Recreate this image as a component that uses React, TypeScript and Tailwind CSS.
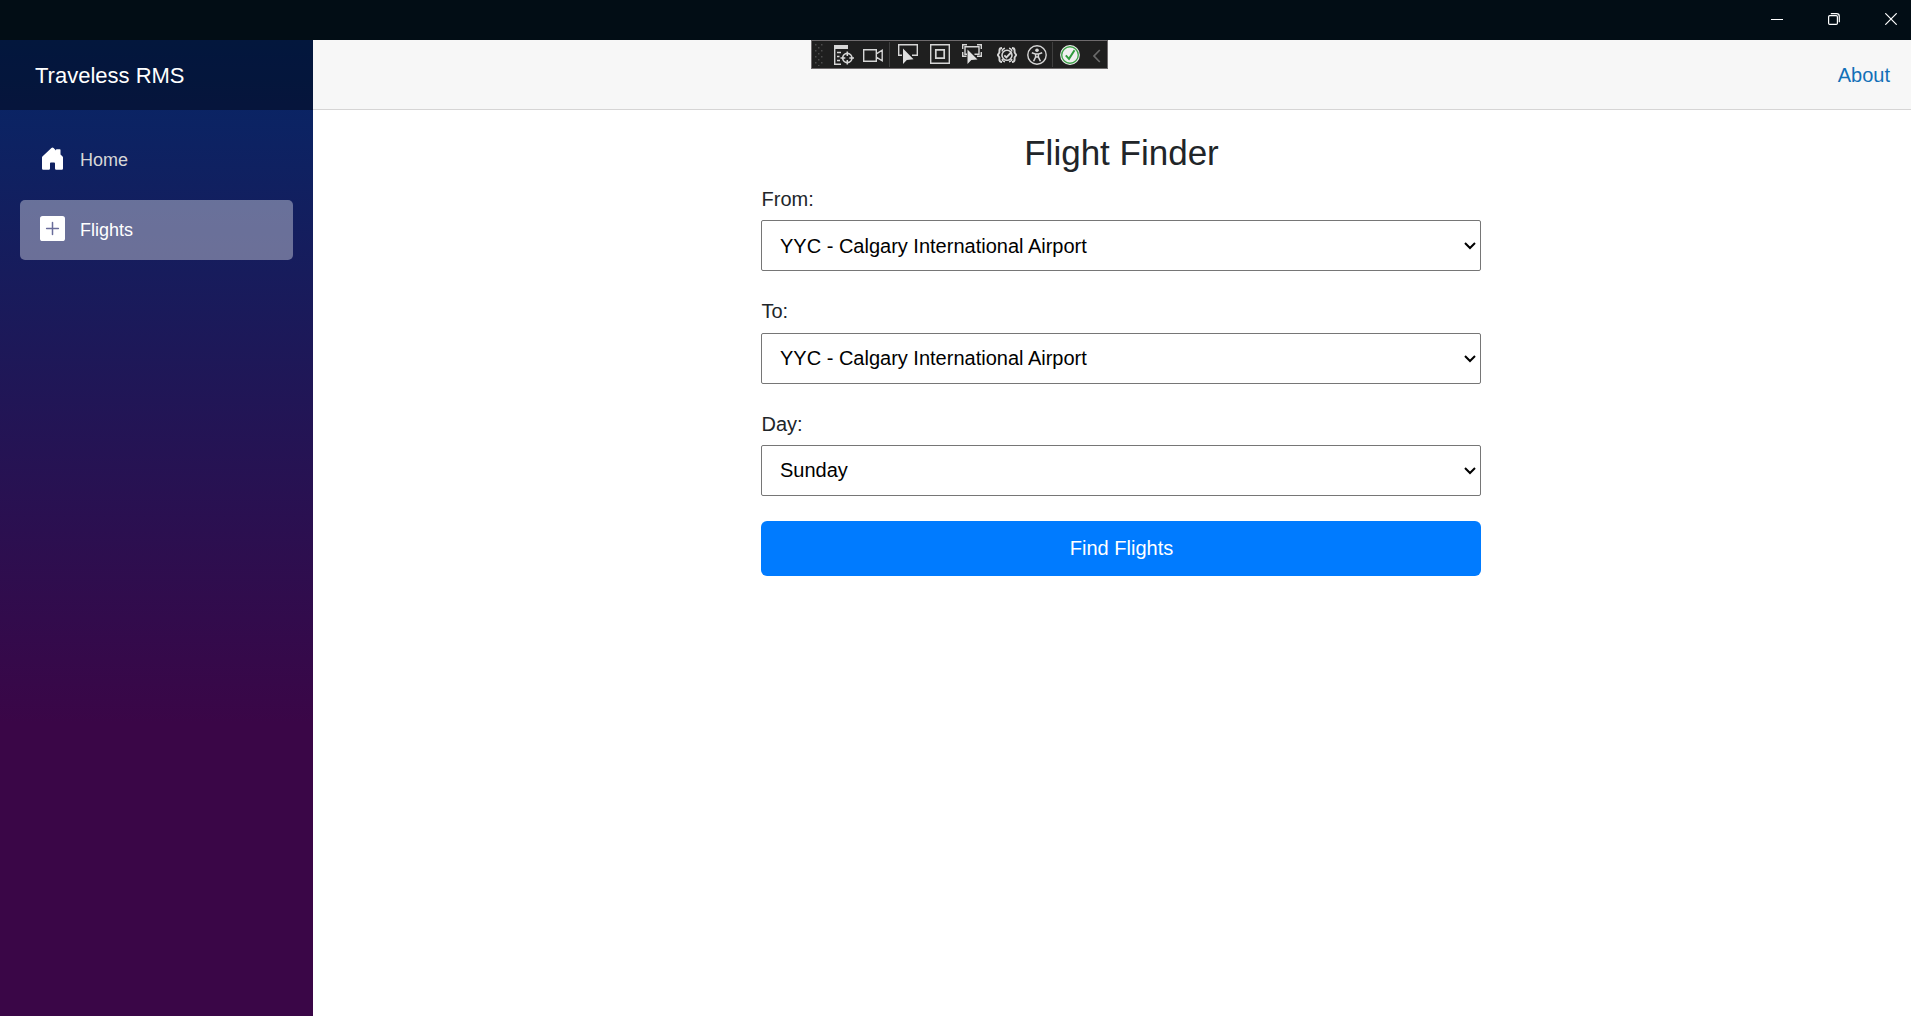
import type { ReactNode } from "react";

const sans = "font-['Liberation_Sans',Arial,sans-serif]";

function Icon({ className, children, w = 20, h = 20 }: { className?: string; children: ReactNode; w?: number; h?: number }) {
  return (
    <svg className={`shrink-0 ${className ?? ""}`} width={w} height={h} viewBox={`0 0 ${w} ${h}`} fill="none" stroke="#d6d6d6" strokeWidth="1.4">
      {children}
    </svg>
  );
}

function WindowControls() {
  return (
    <div className="flex h-10 shrink-0 items-center justify-end gap-[45px] bg-[#020d15] pr-[14px] pb-0.5">
      <Icon w={12} h={12}>
        <path d="M0 6.5H12" stroke="#fff" strokeWidth="1" />
      </Icon>
      <Icon w={12} h={12}>
        <rect x="0.6" y="2.6" width="8.8" height="8.8" rx="1.2" stroke="#fff" strokeWidth="1.2" />
        <path d="M2.8 0.7H8.6Q11.3 0.7 11.3 3.4V9.2" stroke="#fff" strokeWidth="1.2" />
      </Icon>
      <Icon w={12} h={12}>
        <path d="M0.3 0.3L11.7 11.7M11.7 0.3L0.3 11.7" stroke="#fff" strokeWidth="1.2" />
      </Icon>
    </div>
  );
}

const gripRows = [0, 1, 2, 3, 4, 5, 6, 7];

function DebugToolbar() {
  return (
    <div className="absolute top-10 left-[811px] flex h-[29px] w-[297px] items-center border border-[#6e6a6c] bg-[#1f1f1f]">
      <Icon w={8} h={22} className="ml-[3px]">
        {gripRows.map((r) => (
          <g key={r} fill="#4b4b4b" stroke="none">
            {r % 2 === 0 ? (
              <>
                <rect x="0" y={r * 3} width="1.5" height="1.5" />
                <rect x="6" y={r * 3} width="1.5" height="1.5" />
              </>
            ) : (
              <rect x="3" y={r * 3} width="1.5" height="1.5" />
            )}
          </g>
        ))}
      </Icon>
      <Icon className="ml-[11px]">
        <path d="M0 0H14V4H0Z" fill="#d6d6d6" stroke="none" />
        <path d="M0.7 3V19.3H7M3 7.5H7M3 11.5H5.5M3 15.5H6" />
        <circle cx="13.3" cy="13" r="4.6" strokeWidth="1.7" />
        <path d="M13.3 6.5V11M13.3 15V19.5M6.5 13H11.3M15.3 13H20" strokeWidth="1.5" />
      </Icon>
      <Icon className="ml-[9px]">
        <path d="M0.7 4.7H13.3V16.3H0.7ZM13.3 8.8L19.2 5.2V15.8L13.3 12.2" />
      </Icon>
      <div className="ml-[6px] h-[25px] w-px bg-[#3f3f3f]" />
      <Icon className="ml-[8px] -mt-px">
        <path d="M4 11.3H0.7V0.7H19.3V11.3H14" />
        <path d="M5 4.5V20L8.8 16L15.5 15.3Z" fill="#e0e0e0" stroke="none" />
      </Icon>
      <Icon className="ml-[12px] -mt-px">
        <path d="M0.7 0.7H19.3V19.3H0.7Z" />
        <path d="M5.8 5.8H14.2V14.2H5.8Z" strokeWidth="1.7" />
      </Icon>
      <Icon className="ml-[12px] -mt-px">
        <path d="M0.7 5V0.7H5M15 0.7H19.3V5M0.7 8V12.3H4.5M19.3 8V12.3H15M5 10.3H3V2.7H17V10.3H12.5" />
        <path d="M5.5 5.5V20L9.3 16L15.5 15.5Z" fill="#e0e0e0" stroke="none" />
      </Icon>
      <Icon className="ml-[15px]">
        <path d="M5 3Q2.4 3 2.4 5.5V7.5L0.8 10L2.4 12.5V14.5Q2.4 17 5 17M15 3Q17.6 3 17.6 5.5V7.5L19.2 10L17.6 12.5V14.5Q17.6 17 15 17" strokeWidth="1.9" />
        <path d="M8 3.3Q5.2 3.6 5.2 6.5M12 3.3Q14.8 3.6 14.8 6.5M5.2 14Q5.2 16.4 8 16.7M14.8 14Q14.8 16.4 12 16.7" />
        <circle cx="10" cy="10.3" r="5" strokeWidth="1.6" />
        <path d="M7.3 10.3L9.4 12.4L14.5 7" strokeWidth="1.9" />
      </Icon>
      <Icon className="ml-[10px]">
        <circle cx="10" cy="10" r="9.2" />
        <circle cx="10" cy="5.3" r="1.8" fill="#d6d6d6" stroke="none" />
        <path d="M4.8 7.8L8.3 8.9H11.7L15.2 7.8M8.6 9V12L6.6 16.3M11.4 9V12L13.4 16.3M8.6 12H11.4" strokeWidth="1.5" />
      </Icon>
      <div className="ml-[5px] h-[25px] w-px bg-[#3f3f3f]" />
      <Icon className="ml-[7px]">
        <circle cx="10" cy="10" r="9.9" fill="#f0f0f0" stroke="none" />
        <circle cx="10" cy="10" r="8.3" stroke="#3fa24a" strokeWidth="1.4" />
        <path d="M5.8 10.3L9 13.8L14.5 5.2" stroke="#2f9a3c" strokeWidth="2" />
      </Icon>
      <Icon w={8} h={14} className="ml-[13px] mt-0.5">
        <path d="M6.8 1L1 7L6.8 13" stroke="#6a6a6a" strokeWidth="1.7" />
      </Icon>
    </div>
  );
}

function Sidebar() {
  return (
    <aside className="flex w-[313px] shrink-0 flex-col bg-[linear-gradient(180deg,rgb(5,39,103)_0%,#3a0647_70%)]">
      <div className="flex h-[70px] items-center bg-black/40 pl-[35px] text-[22px] text-white">Traveless RMS</div>
      <nav className="flex flex-col gap-2.5 px-5 pt-5 text-[18px]">
        <a className="flex h-[60px] items-center pl-5 text-[#d7d7d7]">
          <svg className="mr-[15px] -mt-1 shrink-0" width="25" height="25" viewBox="0 0 25 25" fill="#fff">
            <path d="M11.4 2Q12.5 1 13.6 2L16 4.4V3.8Q16 3.2 16.7 3.2H19.8Q20.5 3.2 20.5 3.8V8.4L22.6 10.6Q23 11 23 11.6V22.5Q23 23.7 21.8 23.7H16.2Q15 23.7 15 22.5V17.5Q15 16.6 14.1 16.6H10.9Q10 16.6 10 17.5V22.5Q10 23.7 8.8 23.7H3.2Q2 23.7 2 22.5V11.6Q2 11 2.4 10.6Z" />
          </svg>
          Home
        </a>
        <a className="flex h-[60px] items-center rounded-[5px] bg-white/37 pl-5 text-white">
          <svg className="mr-[15px] -mt-[3px] shrink-0" width="25" height="25" viewBox="0 0 25 25">
            <rect width="25" height="25" rx="2.6" fill="#fff" />
            <path d="M6.6 12.5H18.4M12.5 6.6V18.4" stroke="#696c9a" strokeWidth="1.5" strokeLinecap="round" />
          </svg>
          Flights
        </a>
      </nav>
    </aside>
  );
}

function SelectField({ label, options, className, selectClassName }: { label: string; options: string[]; className?: string; selectClassName: string }) {
  return (
    <label className={`flex flex-col ${className ?? ""}`}>
      <span className="h-[30px] pl-[0.5px] leading-[30px]">{label}</span>
      <span className="relative block">
        <select className={`block h-[51px] w-full appearance-none rounded-[2px] border border-[#767676] bg-white pr-8 pl-[18px] text-black ${selectClassName}`}>
          {options.map((o) => (
            <option key={o}>{o}</option>
          ))}
        </select>
        <svg className="pointer-events-none absolute right-[5px] bottom-5" width="12" height="10" viewBox="0 0 12 10" fill="none">
          <path d="M1 2L6 7L11 2" stroke="#000" strokeWidth="2" />
        </svg>
      </span>
    </label>
  );
}

const airports = ["YYC - Calgary International Airport"];

export default function App() {
  return (
    <div className={`relative flex h-[1016px] w-[1911px] flex-col overflow-hidden bg-white text-[20px] text-[#212529] ${sans}`}>
      <WindowControls />
      <div className="flex min-h-0 flex-1">
        <Sidebar />
        <main className="flex flex-1 flex-col">
          <header className="flex h-[70px] shrink-0 items-center justify-end border-b border-[#d6d5d5] bg-[#f7f7f7] pr-[21px]">
            <a className="text-[#1270b8]">About</a>
          </header>
          <section className="mx-auto flex w-[720px] translate-x-[9px] flex-col pt-[22px]">
            <h3 className="mb-2.5 pl-px text-center text-[35px] leading-[42px]">Flight Finder</h3>
            <SelectField label="From:" options={airports} className="gap-1.5" selectClassName="pt-px" />
            <SelectField label="To:" options={airports} className="mt-[25px] gap-[7px]" selectClassName="pb-px" />
            <SelectField label="Day:" options={["Sunday"]} className="mt-[25px] gap-1.5" selectClassName="pb-px" />
            <button className="mt-[25px] h-[55px] rounded-[6px] bg-[#007bff] pb-0.5 pl-px text-white">Find Flights</button>
          </section>
        </main>
      </div>
      <DebugToolbar />
    </div>
  );
}
